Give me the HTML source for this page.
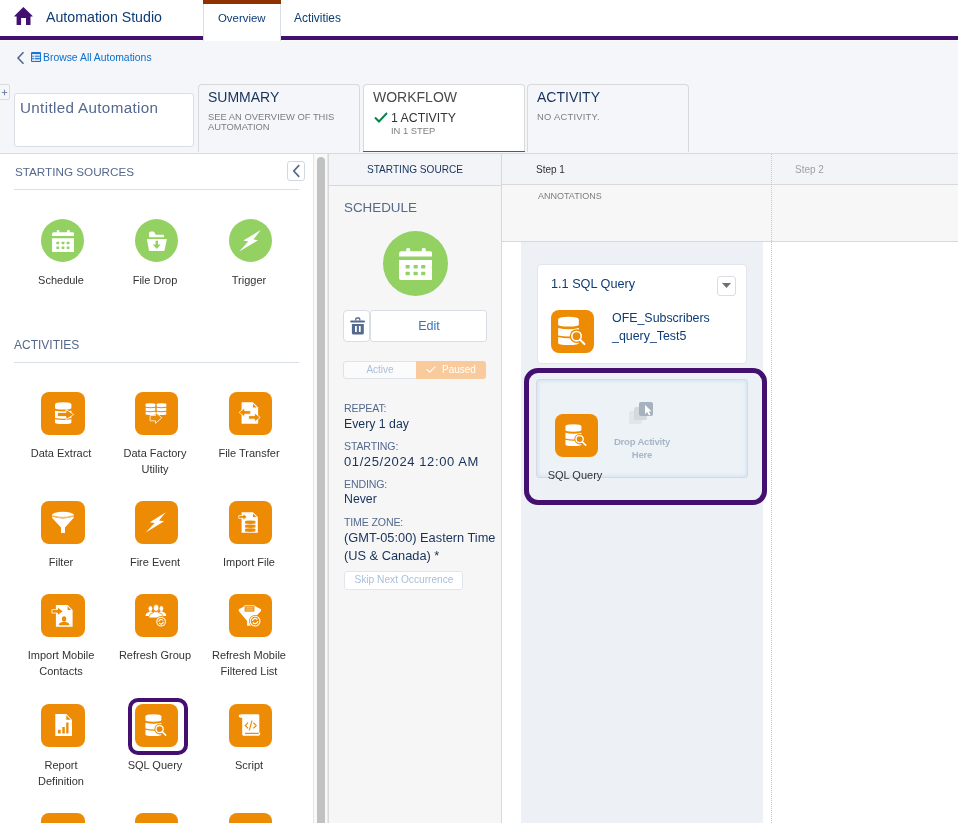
<!DOCTYPE html>
<html><head><meta charset="utf-8">
<style>
*{box-sizing:border-box;margin:0;padding:0}
html,body{width:958px;height:823px;overflow:hidden}
body{position:relative;background:#f4f6f9;font-family:"Liberation Sans",sans-serif;color:#16325c}
.a{position:absolute}
.t{will-change:transform}
.t{position:absolute;white-space:nowrap;line-height:1}
</style></head><body>
<div class="a" style="left:0px;top:0px;width:958px;height:36px;background:#fff"></div>
<div class="a" style="left:0px;top:36px;width:958px;height:4px;background:#43106f"></div>
<div class="a" style="left:0px;top:40px;width:958px;height:1px;background:#fafbfc"></div>
<svg class="a" style="left:14px;top:7px;" width="19" height="19" viewBox="0 0 19 19"><path d="M9.4 0 L18.6 8.9 L18.6 9.6 L16.5 9.6 L16.5 17.9 L12 17.9 L12 11.1 L7.1 11.1 L7.1 17.9 L2.6 17.9 L2.6 9.6 L0.3 9.6 L0.3 8.9 Z" fill="#43106f"/></svg>
<div class="t" style="top:9.98px;font-size:14.2px;color:#0d3c77;left:46px;">Automation Studio</div>
<div class="a" style="left:203px;top:0px;width:78px;height:41px;background:#fff;border-left:1px solid #d8dde6;border-right:1px solid #d8dde6"></div>
<div class="a" style="left:203px;top:0px;width:78px;height:4px;background:#8e3300"></div>
<div class="t" style="top:13.35px;font-size:11.4px;color:#0d3c77;left:218px;">Overview</div>
<div class="t" style="top:12.92px;font-size:11.9px;color:#0d3c77;left:294px;">Activities</div>
<svg class="a" style="left:16px;top:51px;" width="9" height="14" viewBox="0 0 9 14"><path d="M7.5 1.2 L2 7 L7.5 12.8" fill="none" stroke="#54698d" stroke-width="1.6"/></svg>
<svg class="a" style="left:31px;top:52px;" width="10" height="10" viewBox="0 0 10 10"><rect x="0" y="0" width="10" height="10" rx="1" fill="#1b74d2"/><rect x="1" y="2" width="8" height="7" fill="#cfe2f6"/><path d="M1.2 4.3h7.6M1.2 6.6h7.6" stroke="#2a7fd6" stroke-width="1.1"/><path d="M3.3 2v7" stroke="#fff" stroke-width="0.8"/></svg>
<div class="t" style="top:53.39px;font-size:10.4px;color:#0b6fcf;left:43px;">Browse All Automations</div>
<div class="a" style="left:-4px;top:84px;width:14px;height:16px;border:1px solid #dcdcdc;border-radius:2px;background:#f4f6f9"></div>
<svg class="a" style="left:1px;top:89px;" width="7" height="7" viewBox="0 0 7 7"><path d="M3.5 0.8v5.4M0.8 3.5h5.4" stroke="#7487a8" stroke-width="1.1"/></svg>
<div class="a" style="left:14px;top:93px;width:180px;height:54px;background:#fff;border:1px solid #d8dde6;border-radius:3px"></div>
<div class="t" style="top:99.63px;font-size:15.2px;color:#54698d;letter-spacing:0.35px;left:19.5px;">Untitled Automation</div>
<div class="a" style="left:198px;top:84px;width:162px;height:68px;border:1px solid #d9d9d9;border-bottom:none;border-radius:4px 4px 0 0;background:#f4f6f9"></div>
<div class="t" style="top:90.05px;font-size:14px;color:#16325c;left:208px;">SUMMARY</div>
<div class="t" style="top:112.14px;font-size:9.4px;color:#7d7d7d;left:208px;">SEE AN OVERVIEW OF THIS</div>
<div class="t" style="top:122.04px;font-size:9.4px;color:#7d7d7d;left:208px;">AUTOMATION</div>
<div class="a" style="left:363px;top:84px;width:162px;height:68px;border:1px solid #d9d9d9;border-bottom:none;border-radius:4px 4px 0 0;background:#fff"></div>
<div class="a" style="left:363px;top:150.8px;width:162px;height:1.5px;background:#0070d2"></div>
<div class="t" style="top:90.05px;font-size:14px;color:#4a4a4a;left:373px;">WORKFLOW</div>
<svg class="a" style="left:374px;top:112px;" width="14" height="11" viewBox="0 0 14 11"><path d="M1 5.5 L5 9.5 L13 1" fill="none" stroke="#04844b" stroke-width="2"/></svg>
<div class="t" style="top:111.79px;font-size:12.3px;color:#333333;left:391px;">1 ACTIVITY</div>
<div class="t" style="top:126.04px;font-size:9.4px;color:#7d7d7d;left:391px;">IN 1 STEP</div>
<div class="a" style="left:527px;top:84px;width:162px;height:68px;border:1px solid #d9d9d9;border-bottom:none;border-radius:4px 4px 0 0;background:#f4f6f9"></div>
<div class="t" style="top:90.05px;font-size:14px;color:#16325c;left:537px;">ACTIVITY</div>
<div class="t" style="top:112.14px;font-size:9.4px;color:#7d7d7d;letter-spacing:0.25px;left:537px;">NO ACTIVITY.</div>
<div class="a" style="left:0px;top:153px;width:958px;height:1px;background:#dadada"></div>
<div class="a" style="left:0px;top:154px;width:313px;height:669px;background:#fff"></div>
<div class="t" style="top:166.39px;font-size:11.7px;color:#54698d;left:14.5px;">STARTING SOURCES</div>
<div class="a" style="left:14px;top:189px;width:285px;height:1px;background:#d8dde6"></div>
<div class="a" style="left:287px;top:161px;width:18px;height:20px;border:1px solid #d0d8e3;border-radius:3px;background:#fff"></div>
<svg class="a" style="left:292px;top:164px;" width="9" height="14" viewBox="0 0 9 14"><path d="M7.2 1.2 L1.8 7 L7.2 12.8" fill="none" stroke="#54698d" stroke-width="1.7"/></svg>
<div class="a" style="left:41.3px;top:219px;width:43.2px;height:43.2px;background:#93d162;border-radius:50%"></div>
<div class="a" style="left:134.9px;top:219px;width:43.2px;height:43.2px;background:#93d162;border-radius:50%"></div>
<div class="a" style="left:228.9px;top:219px;width:43.2px;height:43.2px;background:#93d162;border-radius:50%"></div>
<svg class="a" style="left:51.8px;top:229.8px;" width="22.2" height="22.2" viewBox="0 0 33.5 32" preserveAspectRatio="none"><path d="M0 6 Q0 3.3 2.5 3.3 L31 3.3 Q33.5 3.3 33.5 6 L33.5 8.5 L0 8.5 Z" fill="#fff"/><rect x="7.2" y="0" width="4" height="4.5" rx="1.5" fill="#fff"/><rect x="22.8" y="0" width="4" height="4.5" rx="1.5" fill="#fff"/><path d="M0 12 L33.5 12 L33.5 30 Q33.5 32 31.5 32 L2 32 Q0 32 0 30 Z" fill="#fff"/><rect x="6.6" y="17" width="4.1" height="3.6" rx="0.6" fill="#93d162"/><rect x="6.6" y="23.7" width="4.1" height="3.6" rx="0.6" fill="#93d162"/><rect x="14.6" y="17" width="4.1" height="3.6" rx="0.6" fill="#93d162"/><rect x="14.6" y="23.7" width="4.1" height="3.6" rx="0.6" fill="#93d162"/><rect x="22.2" y="17" width="4.1" height="3.6" rx="0.6" fill="#93d162"/><rect x="22.2" y="23.7" width="4.1" height="3.6" rx="0.6" fill="#93d162"/></svg>
<svg class="a" style="left:145px;top:230px;" width="24" height="22" viewBox="0 0 24 22"><path d="M4.1 7.3 L4.1 3 Q4.1 1.5 5.6 1.5 L8 1.5 Q9 1.5 9.6 2.5 L10.5 4.7 L18 4.7 Q19 4.7 19 5.7 L19 7.3 Z" fill="#fff"/><path d="M1.8 9.1 L21.9 9.1 L19.6 20.2 Q19.4 20.9 18.6 20.9 L4.9 20.9 Q4.1 20.9 3.9 20.2 Z" fill="#fff"/><rect x="10.6" y="10.7" width="2.4" height="5" fill="#93d162"/><path d="M7.8 14.6 L15.6 14.6 L11.8 19 Z" fill="#93d162"/></svg>
<svg class="a" style="left:239px;top:230px;" width="22" height="22" viewBox="0 0 22 22"><path d="M21.8 0 L4.3 10.6 L9.2 11.6 L0.2 21.6 L19 10.2 L14.4 9.4 Z" fill="#fff"/></svg>
<div class="t" style="top:274.99px;font-size:11px;color:#333333;left:-89.10px;width:300px;text-align:center;">Schedule</div>
<div class="t" style="top:274.99px;font-size:11px;color:#333333;left:4.50px;width:300px;text-align:center;">File Drop</div>
<div class="t" style="top:274.99px;font-size:11px;color:#333333;left:98.50px;width:300px;text-align:center;">Trigger</div>
<div class="t" style="top:339.24px;font-size:12px;color:#54698d;left:14.4px;">ACTIVITIES</div>
<div class="a" style="left:14px;top:362px;width:285px;height:1px;background:#d8dde6"></div>
<div class="a" style="left:41px;top:392px;width:44px;height:43px;background:#ed8b04;border-radius:8px"></div>
<svg class="a" style="left:41px;top:392px;" width="44" height="43" viewBox="0.00 0.00 44.00 43.00"><path d="M14 12.5 Q14 10.3 22.2 10.3 Q30.4 10.3 30.4 12.5 L30.4 16 Q30.4 17.6 22.2 17.6 Q14 17.6 14 16 Z" fill="#fff"/><path d="M14 18.8 Q18 19.6 22.2 19.6 Q26.4 19.6 30.4 18.8 L30.4 26 Q26.4 26.7 22.2 26.7 Q18 26.7 14 26 Z" fill="#fff"/><path d="M14 27.3 Q18 28 22.2 28 Q26.4 28 30.4 27.3 L30.4 30.5 Q30.4 32 22.2 32 Q14 32 14 30.5 Z" fill="#fff"/><path d="M16.5 20.5 L25 20.5 L25 17.5 L32.8 22.5 L25 27.5 L25 24.5 L16.5 24.5 Z" fill="#ed8b04" stroke="#fff" stroke-width="0.8"/></svg>
<div class="t" style="top:447.69px;font-size:11px;color:#333333;left:-89.00px;width:300px;text-align:center;">Data Extract</div>
<div class="a" style="left:135px;top:392px;width:43px;height:43px;background:#ed8b04;border-radius:8px"></div>
<svg class="a" style="left:135px;top:392px;" width="43" height="43" viewBox="0.00 0.00 44.00 43.00"><path d="M10.9 12 Q10.9 10.9 15.8 10.9 Q20.700000000000003 10.9 20.700000000000003 12 L20.700000000000003 14.5 Q15.8 15.5 10.9 14.5 Z" fill="#fff"/><path d="M10.9 15.6 Q15.8 16.6 20.700000000000003 15.6 L20.700000000000003 18.6 Q15.8 19.6 10.9 18.6 Z" fill="#fff"/><path d="M10.9 19.7 Q15.8 20.7 20.700000000000003 19.7 L20.700000000000003 22.6 Q15.8 23.7 10.9 22.6 Z" fill="#fff"/><path d="M22.2 12 Q22.2 10.9 27.1 10.9 Q32.0 10.9 32.0 12 L32.0 14.5 Q27.1 15.5 22.2 14.5 Z" fill="#fff"/><path d="M22.2 15.6 Q27.1 16.6 32.0 15.6 L32.0 18.6 Q27.1 19.6 22.2 18.6 Z" fill="#fff"/><path d="M22.2 19.7 Q27.1 20.7 32.0 19.7 L32.0 22.6 Q27.1 23.7 22.2 22.6 Z" fill="#fff"/><path d="M15.5 23.5 L15.5 29 L21 29 L21 31.6 L27.5 25.8 L21 20.5 L21 23.5 Z" fill="#ed8b04" stroke="#fff" stroke-width="0.8"/></svg>
<div class="t" style="top:447.69px;font-size:11px;color:#333333;left:5.00px;width:300px;text-align:center;">Data Factory</div>
<div class="t" style="top:463.69px;font-size:11px;color:#333333;left:5.00px;width:300px;text-align:center;">Utility</div>
<div class="a" style="left:229px;top:392px;width:43px;height:43px;background:#ed8b04;border-radius:8px"></div>
<svg class="a" style="left:229px;top:392px;" width="43" height="43" viewBox="0.00 0.00 44.00 43.00"><path d="M12.9 10 L24.5 10 L29.8 15.3 L29.8 31.9 L12.9 31.9 Z" fill="#fff"/><path d="M24.5 11.5 L28.3 15.3 L24.5 15.3 Z" fill="#ed8b04"/><path d="M22.2 18.6 L16 18.6 L16 15.8 L10.3 20.4 L16 25 L16 22.2 L22.2 22.2 Z" fill="#ed8b04" stroke="#fff" stroke-width="0.8"/><path d="M20 23.7 L26.2 23.7 L26.2 20.9 L31.9 25.5 L26.2 30.1 L26.2 27.3 L20 27.3 Z" fill="#ed8b04" stroke="#fff" stroke-width="0.8"/></svg>
<div class="t" style="top:447.69px;font-size:11px;color:#333333;left:99.00px;width:300px;text-align:center;">File Transfer</div>
<div class="a" style="left:41px;top:501px;width:44px;height:43px;background:#ed8b04;border-radius:8px"></div>
<svg class="a" style="left:41px;top:501px;" width="44" height="43" viewBox="0.00 0.00 44.00 43.00"><ellipse cx="21.9" cy="13.9" rx="10.9" ry="3.1" fill="#fff"/><path d="M11 15.5 Q21.9 19.5 32.8 15.5 L32.8 16.8 L24 26.4 L24 31.9 L20 31.9 L20 26.4 L11 16.8 Z" fill="#fff"/><path d="M12 14.8 Q21.9 18 31.8 14.8" stroke="#ed8b04" stroke-width="0.7" fill="none"/></svg>
<div class="t" style="top:556.69px;font-size:11px;color:#333333;left:-89.00px;width:300px;text-align:center;">Filter</div>
<div class="a" style="left:135px;top:501px;width:43px;height:43px;background:#ed8b04;border-radius:8px"></div>
<svg class="a" style="left:135px;top:501px;" width="43" height="43" viewBox="0.00 0.00 44.00 43.00"><path d="M31.6 10.9 L15.2 21.2 L20.1 22.1 L11 31.8 L29.8 20.3 L24.6 19.4 Z" fill="#fff"/></svg>
<div class="t" style="top:556.69px;font-size:11px;color:#333333;left:5.00px;width:300px;text-align:center;">Fire Event</div>
<div class="a" style="left:229px;top:501px;width:43px;height:43px;background:#ed8b04;border-radius:8px"></div>
<svg class="a" style="left:229px;top:501px;" width="43" height="43" viewBox="0.00 0.00 44.00 43.00"><path d="M12.9 10.9 L24.5 10.9 L29.5 15.9 L29.5 31.9 L12.9 31.9 Z" fill="#fff"/><path d="M24.5 12.2 L28.2 15.9 L24.5 15.9 Z" fill="#ed8b04"/><path d="M10 14.4 L14.5 14.4 L14.5 12.4 L18.4 15.8 L14.5 19.2 L14.5 17.2 L10 17.2 Z" fill="#ed8b04" stroke="#fff" stroke-width="0.8"/><path d="M16.4 20.4 Q16.4 19.4 21.7 19.4 Q27 19.4 27 20.4 L27 22.599999999999998 Q21.7 23.4 16.4 22.599999999999998 Z" fill="#ed8b04"/><path d="M16.4 24.5 Q16.4 23.5 21.7 23.5 Q27 23.5 27 24.5 L27 26.7 Q21.7 27.5 16.4 26.7 Z" fill="#ed8b04"/><path d="M16.4 28.5 Q16.4 27.5 21.7 27.5 Q27 27.5 27 28.5 L27 30.7 Q21.7 31.5 16.4 30.7 Z" fill="#ed8b04"/></svg>
<div class="t" style="top:556.69px;font-size:11px;color:#333333;left:99.00px;width:300px;text-align:center;">Import File</div>
<div class="a" style="left:41px;top:594px;width:44px;height:43px;background:#ed8b04;border-radius:8px"></div>
<svg class="a" style="left:41px;top:594px;" width="44" height="43" viewBox="0.00 0.00 44.00 43.00"><path d="M14.9 10.9 L26.6 10.9 L31.6 15.9 L31.6 32.8 L14.9 32.8 Z" fill="#fff"/><path d="M26.6 12.2 L30.3 15.9 L26.6 15.9 Z" fill="#ed8b04"/><path d="M10.9 15.6 L16.5 15.6 L16.5 13 L22.2 17.3 L16.5 21.6 L16.5 19 L10.9 19 Z" fill="#ed8b04" stroke="#fff" stroke-width="0.8"/><ellipse cx="23.1" cy="25" rx="2.2" ry="2.8" fill="#ed8b04"/><path d="M17.6 31.3 Q18 28.5 21.5 28 L24.7 28 Q28.2 28.5 28.6 31.3 Z" fill="#ed8b04"/></svg>
<div class="t" style="top:649.69px;font-size:11px;color:#333333;left:-89.00px;width:300px;text-align:center;">Import Mobile</div>
<div class="t" style="top:665.69px;font-size:11px;color:#333333;left:-89.00px;width:300px;text-align:center;">Contacts</div>
<div class="a" style="left:135px;top:594px;width:43px;height:43px;background:#ed8b04;border-radius:8px"></div>
<svg class="a" style="left:135px;top:594px;" width="43" height="43" viewBox="0.00 0.00 44.00 43.00"><ellipse cx="15.8" cy="14.4" rx="2" ry="2.6" fill="#fff"/><path d="M10.9 21.9 L10.9 21 Q11.3 18.6 14.2 18 L15 17.2 L16.6 17.2 L17.4 18 Q20 18.6 20.4 21 L20.4 21.9 Z" fill="#fff"/><ellipse cx="27" cy="14.4" rx="2" ry="2.6" fill="#fff"/><path d="M22.5 21.9 L22.5 21 Q22.9 18.6 25.5 18 L26.2 17.2 L27.8 17.2 L28.6 18 Q31.5 18.6 31.9 21 L31.9 21.9 Z" fill="#fff"/><ellipse cx="21.6" cy="13.8" rx="2.9" ry="3.5" fill="#fff" stroke="#ed8b04" stroke-width="0.8"/><path d="M14.2 24 L14.2 22.6 Q14.8 19.5 18.8 18.6 L19.8 17.6 L23.4 17.6 L24.4 18.6 Q28.4 19.5 29 22.6 L29 24 Z" fill="#fff" stroke="#ed8b04" stroke-width="0.8"/><circle cx="26.7" cy="27.9" r="5.8" fill="#ed8b04"/><circle cx="26.7" cy="27.9" r="4.4" fill="none" stroke="#fff" stroke-width="1.1"/><path d="M24.4 27.9 A2.3 2.3 0 0 1 28.6 26.6 M29 27.9 A2.3 2.3 0 0 1 24.8 29.2" stroke="#fff" stroke-width="1.2" fill="none"/></svg>
<div class="t" style="top:649.69px;font-size:11px;color:#333333;left:5.00px;width:300px;text-align:center;">Refresh Group</div>
<div class="a" style="left:229px;top:594px;width:43px;height:43px;background:#ed8b04;border-radius:8px"></div>
<svg class="a" style="left:229px;top:594px;" width="43" height="43" viewBox="0.00 0.00 44.00 43.00"><path d="M10 15 L16 12 L27 12 L32.8 15 L32.8 17 L23 27 L23 32 L18.5 32 L18.5 27 L10 17 Z" fill="#fff"/><rect x="15.5" y="11.5" width="11" height="6.5" rx="0.8" fill="#ed8b04" stroke="#fff" stroke-width="0.9"/><path d="M17 13.7 h8 M17 15.8 h8" stroke="#fff" stroke-width="0.6"/><circle cx="26.7" cy="27.2" r="6.3" fill="#ed8b04"/><circle cx="26.7" cy="27.2" r="5" fill="none" stroke="#fff" stroke-width="1.1"/><path d="M24 27.2 A2.7 2.7 0 0 1 29 25.8 M29.4 27.2 A2.7 2.7 0 0 1 24.4 28.6" stroke="#fff" stroke-width="1.3" fill="none"/></svg>
<div class="t" style="top:649.69px;font-size:11px;color:#333333;left:99.00px;width:300px;text-align:center;">Refresh Mobile</div>
<div class="t" style="top:665.69px;font-size:11px;color:#333333;left:99.00px;width:300px;text-align:center;">Filtered List</div>
<div class="a" style="left:41px;top:704px;width:44px;height:43px;background:#ed8b04;border-radius:8px"></div>
<svg class="a" style="left:41px;top:704px;" width="44" height="43" viewBox="0.00 0.00 44.00 43.00"><path d="M14.3 10 L25.3 10 L31 15.7 L31 31.9 L14.3 31.9 Z" fill="#fff"/><path d="M25.3 11.3 L29.7 15.7 L25.3 15.7 Z" fill="#ed8b04"/><rect x="17" y="25.8" width="2.7" height="3.7" fill="#ed8b04"/><rect x="21.3" y="23" width="2.5" height="6.5" fill="#ed8b04"/><rect x="25.2" y="18.5" width="2.3" height="11" fill="#ed8b04"/></svg>
<div class="t" style="top:759.69px;font-size:11px;color:#333333;left:-89.00px;width:300px;text-align:center;">Report</div>
<div class="t" style="top:775.69px;font-size:11px;color:#333333;left:-89.00px;width:300px;text-align:center;">Definition</div>
<div class="a" style="left:135px;top:704px;width:43px;height:43px;background:#ed8b04;border-radius:8px"></div>
<svg class="a" style="left:135px;top:704px;" width="43" height="43" viewBox="0.00 0.00 44.00 43.00"><path d="M10.7 12 Q10.7 9.9 18.85 9.9 Q27 9.9 27 12 L27 16.2 Q27 17.6 18.85 17.6 Q10.7 17.6 10.7 16.2 Z" fill="#fff"/><path d="M10.7 18.8 Q14.7 19.8 18.85 19.8 Q23 19.8 27 18.8 L27 24.6 Q23 25.5 18.85 25.5 Q14.7 25.5 10.7 24.6 Z" fill="#fff"/><path d="M10.7 25.8 Q14.7 26.8 18.85 26.8 Q23 26.8 27 25.8 L27 30.6 Q27 32.2 18.85 32.2 Q10.7 32.2 10.7 30.6 Z" fill="#fff"/><circle cx="25.2" cy="25.2" r="5.4" fill="#ed8b04"/><circle cx="25.2" cy="25.2" r="3.7" fill="none" stroke="#fff" stroke-width="1.3"/><path d="M27.9 27.9 L31.4 31.4" stroke="#fff" stroke-width="1.6" stroke-linecap="round"/></svg>
<div class="t" style="top:759.69px;font-size:11px;color:#333333;left:5.00px;width:300px;text-align:center;">SQL Query</div>
<div class="a" style="left:229px;top:704px;width:43px;height:43px;background:#ed8b04;border-radius:8px"></div>
<svg class="a" style="left:229px;top:704px;" width="43" height="43" viewBox="0.00 0.00 44.00 43.00"><path d="M13 10 L29.5 10 Q31 10 31 11.5 L31 29 L32 29 Q32 31.9 30 31.9 L14.5 31.9 Q13.5 31.9 13.5 30.5 L13.5 13.5 L12 13.5 Q10 13.5 10 11.8 Q10 10 13 10 Z" fill="#fff"/><path d="M16.5 29.6 L30.5 29.6" stroke="#ed8b04" stroke-width="1.3"/><path d="M19.5 18.5 L16.7 21.5 L19.5 24.5 M25 18.5 L27.8 21.5 L25 24.5 M23.5 16.5 L20.8 26.5" stroke="#ed8b04" stroke-width="1.2" fill="none"/></svg>
<div class="t" style="top:759.69px;font-size:11px;color:#333333;left:99.00px;width:300px;text-align:center;">Script</div>
<div class="a" style="left:41px;top:813px;width:44px;height:43px;background:#ed8b04;border-radius:8px"></div>
<div class="a" style="left:135px;top:813px;width:43px;height:43px;background:#ed8b04;border-radius:8px"></div>
<div class="a" style="left:229px;top:813px;width:43px;height:43px;background:#ed8b04;border-radius:8px"></div>
<div class="a" style="left:128px;top:698px;width:60px;height:57px;border:4px solid #43106f;border-radius:10px"></div>
<div class="a" style="left:313px;top:154px;width:15px;height:669px;background:#f9f9f9;border-left:1px solid #e6e6e6;border-right:1px solid #e6e6e6"></div>
<div class="a" style="left:317px;top:157px;width:8px;height:680px;background:#c1c1c1;border-radius:4px"></div>
<div class="a" style="left:328px;top:154px;width:174px;height:669px;background:#f6f6f6;border-left:1px solid #d8d8d8;border-right:1px solid #d8d8d8"></div>
<div class="a" style="left:329px;top:154px;width:172px;height:32px;background:#f3f4f8;border-bottom:1px solid #d8d8d8"></div>
<div class="t" style="top:165.45px;font-size:10.1px;color:#16325c;left:265.20px;width:300px;text-align:center;">STARTING SOURCE</div>
<div class="t" style="top:200.65px;font-size:13.4px;color:#54698d;left:343.8px;">SCHEDULE</div>
<div class="a" style="left:382.7px;top:230.8px;width:65px;height:65px;background:#93d162;border-radius:50%"></div>
<svg class="a" style="left:398.8px;top:248px;" width="33.5" height="32" viewBox="0 0 33.5 32"><path d="M0 6 Q0 3.3 2.5 3.3 L31 3.3 Q33.5 3.3 33.5 6 L33.5 8.5 L0 8.5 Z" fill="#fff"/><rect x="7.2" y="0" width="4" height="4.5" rx="1.5" fill="#fff"/><rect x="22.8" y="0" width="4" height="4.5" rx="1.5" fill="#fff"/><path d="M0 12 L33.5 12 L33.5 30 Q33.5 32 31.5 32 L2 32 Q0 32 0 30 Z" fill="#fff"/><rect x="6.6" y="17" width="4.1" height="3.6" rx="0.6" fill="#93d162"/><rect x="6.6" y="23.7" width="4.1" height="3.6" rx="0.6" fill="#93d162"/><rect x="14.6" y="17" width="4.1" height="3.6" rx="0.6" fill="#93d162"/><rect x="14.6" y="23.7" width="4.1" height="3.6" rx="0.6" fill="#93d162"/><rect x="22.2" y="17" width="4.1" height="3.6" rx="0.6" fill="#93d162"/><rect x="22.2" y="23.7" width="4.1" height="3.6" rx="0.6" fill="#93d162"/></svg>
<div class="a" style="left:343px;top:310px;width:27px;height:32px;background:#fff;border:1px solid #d8dde6;border-radius:4px"></div>
<div class="a" style="left:370.3px;top:310px;width:116.7px;height:32px;background:#fff;border:1px solid #d8dde6;border-radius:3px"></div>
<svg class="a" style="left:350px;top:317px;" width="16" height="18" viewBox="0 0 16 18"><path d="M5.8 3.6 L5.8 2.2 Q5.8 1 7 1 L8.6 1 Q9.8 1 9.8 2.2 L9.8 3.6" fill="none" stroke="#54698d" stroke-width="1.3"/><rect x="0.2" y="3.4" width="14.8" height="2.1" rx="1" fill="#54698d"/><path d="M1.9 7 L13.8 7 L13.8 16 Q13.8 17.6 12.2 17.6 L3.5 17.6 Q1.9 17.6 1.9 16 Z" fill="#54698d"/><rect x="5" y="9" width="1.8" height="6" fill="#fff"/><rect x="8.9" y="9" width="1.8" height="6" fill="#fff"/></svg>
<div class="t" style="top:320.33px;font-size:12.6px;color:#3775b9;left:278.80px;width:300px;text-align:center;">Edit</div>
<div class="a" style="left:343px;top:361px;width:74px;height:17.5px;background:#fbfbfb;border:1px solid #dde3ea;border-radius:3px 0 0 3px"></div>
<div class="a" style="left:416px;top:361px;width:70px;height:17.5px;background:#f8ca9c;border-radius:0 3px 3px 0"></div>
<div class="t" style="top:364.53px;font-size:10px;color:#a9bfd9;left:230.00px;width:300px;text-align:center;">Active</div>
<svg class="a" style="left:426px;top:365.5px;" width="10" height="7" viewBox="0 0 10 7"><path d="M0.6 3.2 L3.6 6.2 L9.4 0.6" fill="none" stroke="#fff" stroke-width="1.1"/></svg>
<div class="t" style="top:364.53px;font-size:10px;color:#fff;left:441.5px;">Paused</div>
<div class="t" style="top:403.02px;font-size:10.6px;color:#54698d;letter-spacing:-0.15px;left:344px;">REPEAT:</div>
<div class="t" style="top:418.09px;font-size:12.3px;color:#16325c;left:344px;">Every 1 day</div>
<div class="t" style="top:441.02px;font-size:10.6px;color:#54698d;letter-spacing:-0.15px;left:344px;">STARTING:</div>
<div class="t" style="top:455.39px;font-size:13px;color:#16325c;letter-spacing:0.6px;left:344px;">01/25/2024 12:00 AM</div>
<div class="t" style="top:478.92px;font-size:10.6px;color:#54698d;letter-spacing:-0.15px;left:344px;">ENDING:</div>
<div class="t" style="top:493.29px;font-size:12.3px;color:#16325c;left:344px;">Never</div>
<div class="t" style="top:516.82px;font-size:10.6px;color:#54698d;letter-spacing:-0.15px;left:344px;">TIME ZONE:</div>
<div class="t" style="top:532.16px;font-size:12.8px;color:#16325c;left:344px;">(GMT-05:00) Eastern Time</div>
<div class="t" style="top:550.16px;font-size:12.8px;color:#16325c;left:344px;">(US &amp; Canada) *</div>
<div class="a" style="left:344px;top:571px;width:119px;height:19px;background:#fff;border:1px solid #e1e6ec;border-radius:3px;"></div>
<div class="t" style="top:575.36px;font-size:10.2px;color:#a9bfd9;left:253.50px;width:300px;text-align:center;">Skip Next Occurrence</div>
<div class="a" style="left:502px;top:154px;width:456px;height:669px;background:#fff"></div>
<div class="a" style="left:502px;top:154px;width:456px;height:31px;background:#f3f4f8;border-bottom:1px solid #d8d8d8"></div>
<div class="a" style="left:502px;top:185px;width:456px;height:57px;background:#f7f7f7;border-bottom:1px solid #d8d8d8"></div>
<div class="a" style="left:521px;top:242px;width:242px;height:581px;background:#edf1f5"></div>
<div class="a" style="left:771px;top:154px;width:1px;height:669px;border-left:1px dotted #c8c8c8"></div>
<div class="t" style="top:164.53px;font-size:10px;color:#333333;left:535.6px;">Step 1</div>
<div class="t" style="top:164.53px;font-size:10px;color:#a0a0a0;left:794.7px;">Step 2</div>
<div class="t" style="top:192.28px;font-size:9px;color:#7d7d7d;left:538px;">ANNOTATIONS</div>
<div class="a" style="left:537px;top:264px;width:210px;height:100px;background:#fff;border:1px solid #e0e5ee;border-radius:4px"></div>
<div class="t" style="top:277.55px;font-size:12.7px;color:#0d3c77;left:551.3px;">1.1 SQL Query</div>
<div class="a" style="left:717px;top:276px;width:19px;height:20px;background:#fff;border:1px solid #d8dde6;border-radius:3px"></div>
<svg class="a" style="left:722px;top:283px;" width="9" height="5" viewBox="0 0 9 5"><path d="M0 0 L9 0 L4.5 5 Z" fill="#706e6b"/></svg>
<div class="a" style="left:551px;top:309.6px;width:43px;height:43px;background:#ed8b04;border-radius:8px"></div>
<svg class="a" style="left:551px;top:309.6px;" width="43" height="43" viewBox="5.08 4.96 33.85 33.08"><path d="M10.7 12 Q10.7 9.9 18.85 9.9 Q27 9.9 27 12 L27 16.2 Q27 17.6 18.85 17.6 Q10.7 17.6 10.7 16.2 Z" fill="#fff"/><path d="M10.7 18.8 Q14.7 19.8 18.85 19.8 Q23 19.8 27 18.8 L27 24.6 Q23 25.5 18.85 25.5 Q14.7 25.5 10.7 24.6 Z" fill="#fff"/><path d="M10.7 25.8 Q14.7 26.8 18.85 26.8 Q23 26.8 27 25.8 L27 30.6 Q27 32.2 18.85 32.2 Q10.7 32.2 10.7 30.6 Z" fill="#fff"/><circle cx="25.2" cy="25.2" r="5.4" fill="#ed8b04"/><circle cx="25.2" cy="25.2" r="3.7" fill="none" stroke="#fff" stroke-width="1.3"/><path d="M27.9 27.9 L31.4 31.4" stroke="#fff" stroke-width="1.6" stroke-linecap="round"/></svg>
<div class="t" style="top:312.20px;font-size:12.4px;color:#0d3c77;left:611.5px;">OFE_Subscribers</div>
<div class="t" style="top:329.70px;font-size:12.4px;color:#0d3c77;left:611.5px;">_query_Test5</div>
<div class="a" style="left:524px;top:368px;width:243px;height:137px;border:5px solid #43106f;border-radius:14px"></div>
<div class="a" style="left:536px;top:379px;width:212px;height:99px;background:#edf2f7;border:1px solid #d7dadd;border-radius:3px;box-shadow:inset 0 0 4px 1px #d3e2f1"></div>
<div class="a" style="left:555px;top:414px;width:43px;height:43px;background:#ed8b04;border-radius:8px"></div>
<svg class="a" style="left:555px;top:414px;" width="43" height="43" viewBox="0.00 0.00 44.00 43.00"><path d="M10.7 12 Q10.7 9.9 18.85 9.9 Q27 9.9 27 12 L27 16.2 Q27 17.6 18.85 17.6 Q10.7 17.6 10.7 16.2 Z" fill="#fff"/><path d="M10.7 18.8 Q14.7 19.8 18.85 19.8 Q23 19.8 27 18.8 L27 24.6 Q23 25.5 18.85 25.5 Q14.7 25.5 10.7 24.6 Z" fill="#fff"/><path d="M10.7 25.8 Q14.7 26.8 18.85 26.8 Q23 26.8 27 25.8 L27 30.6 Q27 32.2 18.85 32.2 Q10.7 32.2 10.7 30.6 Z" fill="#fff"/><circle cx="25.2" cy="25.2" r="5.4" fill="#ed8b04"/><circle cx="25.2" cy="25.2" r="3.7" fill="none" stroke="#fff" stroke-width="1.3"/><path d="M27.9 27.9 L31.4 31.4" stroke="#fff" stroke-width="1.6" stroke-linecap="round"/></svg>
<div class="t" style="top:470.09px;font-size:11px;color:#333333;left:425.00px;width:300px;text-align:center;">SQL Query</div>
<svg class="a" style="left:629px;top:402px;" width="25" height="23" viewBox="0 0 25 23"><rect x="0" y="9" width="13" height="13" rx="2" fill="#e2e6eb"/><rect x="5" y="5" width="13" height="13" rx="2" fill="#d3d9e0"/><rect x="10" y="0" width="14" height="14" rx="2" fill="#a6b3bf"/><path d="M16 3 L16 12 L18.2 10 L20 13.5 L21.5 12.8 L19.8 9.5 L22.5 9.3 Z" fill="#fff"/></svg>
<div class="t" style="top:436.87px;font-size:9.6px;color:#a8b7c7;font-weight:bold;letter-spacing:-0.25px;left:491.80px;width:300px;text-align:center;">Drop Activity</div>
<div class="t" style="top:450.07px;font-size:9.6px;color:#a8b7c7;font-weight:bold;letter-spacing:-0.25px;left:491.80px;width:300px;text-align:center;">Here</div>
</body></html>
